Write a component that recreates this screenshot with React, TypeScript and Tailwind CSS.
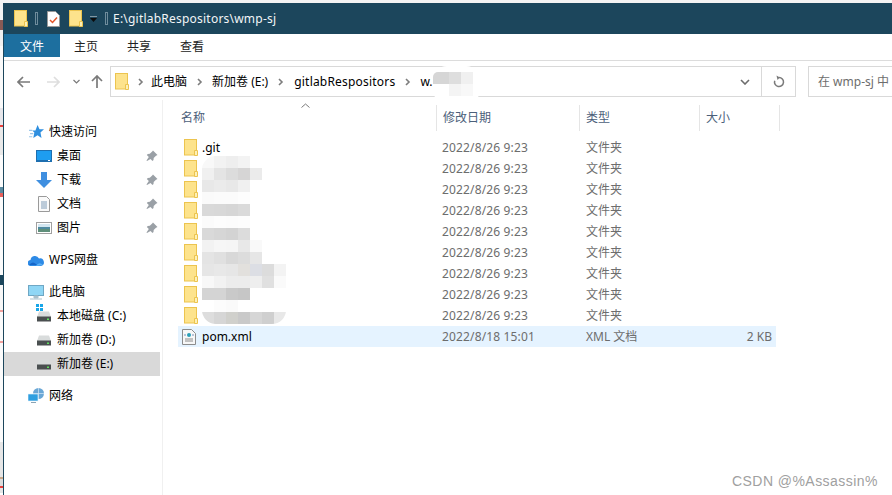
const edgeStrip = [
  { h: 20, c: "#f3f3f3" },
  { h: 10, c: "#8a5a55" },
  { h: 16, c: "#f0f0f0" },
  { h: 62, c: "#fafafa" },
  { h: 17, c: "#e6e6ea" },
  { h: 2, c: "#e8403c" },
  { h: 28, c: "#e9e9e9" },
  { h: 32, c: "#fcfcfc" },
  { h: 6, c: "#5b8aa0" },
  { h: 4, c: "#e8605c" },
  { h: 78, c: "#fbfbfb" },
  { h: 10, c: "#1c465c" },
  { h: 25, c: "#f7f7f7" },
  { h: 2, c: "#f2a09c" },
  { h: 29, c: "#fbfbfb" },
  { h: 2, c: "#f2a09c" },
  { h: 99, c: "#fbfbfb" },
  { h: 35, c: "#e6e6e6" },
  { h: 2, c: "#c9a888" },
  { h: 7, c: "#dcdcdc" },
  { h: 2, c: "#e8403c" },
  { h: 5, c: "#e6e6e6" },
];

const mosaic = [
  ["#f8f8f8", "#f2f2f2", "#eeeeee", "#f3f3f3", "#ffffff", "#ffffff", "#ffffff"],
  ["#f0f0f0", "#e4e4e4", "#dcdcdc", "#d6d5d5", "#ebebeb", "#ffffff", "#ffffff"],
  ["#e8e8e8", "#ebebeb", "#e8e8e8", "#f0f0f0", "#ffffff", "#ffffff", "#ffffff"],
  ["#fafafa", "#fbfbfb", "#fbfbfb", "#fdfdfd", "#ffffff", "#ffffff", "#ffffff"],
  ["#d9d9d9", "#d8d8d8", "#d6d6d6", "#dadada", "#ffffff", "#ffffff", "#ffffff"],
  ["#fbfbfb", "#fdfdfd", "#fcfcfc", "#fdfdfd", "#ffffff", "#ffffff", "#ffffff"],
  ["#d9d9d9", "#d6d6d6", "#d3d3d3", "#dcdcdc", "#ffffff", "#ffffff", "#ffffff"],
  ["#f2f2f2", "#f6f6f6", "#f5f5f5", "#e8e8e8", "#f9f9f9", "#ffffff", "#ffffff"],
  ["#e4e4e4", "#e0e0e0", "#d8d8d8", "#dcdcdc", "#e6e6e6", "#ffffff", "#ffffff"],
  ["#e6e6e6", "#e8e8e8", "#e6e6e6", "#e2e0dd", "#dcdee4", "#dcdcdc", "#f3f3f3"],
  ["#f8f8f8", "#f2f2f2", "#ececec", "#ececec", "#eeeeee", "#e0e0e0", "#fafafa"],
  ["#d4d4d4", "#d4d4d4", "#c9c9c9", "#c6c6c6", "#ffffff", "#ffffff", "#ffffff"],
  ["#ffffff", "#fcfcfc", "#fafafa", "#ffffff", "#ffffff", "#ffffff", "#ffffff"],
  ["#dddddd", "#d6d6d6", "#d0d0cc", "#c9c9c9", "#d6d6d6", "#cfcfcf", "#e8e8e8"],
];

function Folder({ className = "" }: { className?: string }) {
  return (
    <svg width="14" height="17" viewBox="0 0 14 17" className={className}>
      <rect x="0.5" y="0.5" width="12" height="15.5" fill="#fde38c" stroke="#ecc44f" />
      <path d="M10.5 16.5v-5h3v5z" fill="#fdf0b8" stroke="#ecc44f" />
    </svg>
  );
}

function Chevron() {
  return (
    <svg width="6" height="8" viewBox="0 0 6 8">
      <path d="M1 1l3 3-3 3" fill="none" stroke="#7d7d7d" strokeWidth="1.6" />
    </svg>
  );
}

function Pin() {
  return (
    <svg width="12" height="12" viewBox="0 0 12 12" className="ml-auto mr-[2px]">
      <path d="M7 0.5l4.5 4.5-1.5.7-2.3 2.4-.2 2-1 1-2-2L1 11l-.5-.5 2.3-3.5-2-2 1-1 2-.2 2.4-2.3z" fill="#9aa0a6" />
    </svg>
  );
}

function Drive() {
  return (
    <svg width="14" height="11" viewBox="0 0 14 11">
      <path d="M2 0.5h10l2 5.5H0z" fill="#d9dcdc" />
      <rect y="5.5" width="14" height="5" fill="#4a4f50" />
      <rect x="10" y="7.5" width="2" height="1.5" fill="#5fe05f" />
    </svg>
  );
}

function NavItem({
  icon,
  label,
  indent = false,
  pinned = false,
  active = false,
}: {
  icon: React.ReactNode;
  label: string;
  indent?: boolean;
  pinned?: boolean;
  active?: boolean;
}) {
  return (
    <div className={`flex h-6 w-[156px] items-center ${active ? "bg-[#d9d9d9]" : ""}`}>
      <div className={`flex w-4 justify-center ${indent ? "ml-[32px] mr-[5px]" : "ml-[24px] mr-[5px]"}`}>{icon}</div>
      <span className="whitespace-nowrap text-black">{label}</span>
      {pinned && <Pin />}
    </div>
  );
}

function FileRow({ name, type, size, selected }: { name?: string; type: string; size?: string; selected?: boolean }) {
  return (
    <div className={`flex h-[21px] w-[598px] items-center ${selected ? "bg-[#e5f3ff]" : ""}`}>
      <div className="flex w-[264px] items-center pl-[6px]">
        {selected ? (
          <svg width="14" height="16" viewBox="0 0 14 16" className="-ml-[2px] mr-[6px]">
            <path d="M.5.5h9l4 4v11H.5z" fill="#f7f7f7" stroke="#8c8c8c" />
            <path d="M3 10h8M3 12h8" stroke="#8c8c8c" />
            <circle cx="7" cy="6" r="2" fill="#2a9fb8" />
            <path d="M3.5 6L2.5 6M10.5 6l1 0" stroke="#4a6fb0" strokeWidth="1.4" />
          </svg>
        ) : (
          <Folder className="mr-[4px] -mt-[1px]" />
        )}
        {name && <span className="text-black">{name}</span>}
      </div>
      <span className="w-[144px] tracking-[0.15px] text-[#6d6d6d]">{selected ? "2022/8/18 15:01" : "2022/8/26 9:23"}</span>
      <span className="w-[120px] text-[#6d6d6d]">{type}</span>
      <span className="w-[66px] text-right text-[#6d6d6d]">{size}</span>
    </div>
  );
}

function ColumnHead({ label, width }: { label: string; width: string }) {
  return (
    <div className={`${width} flex h-[26px] items-center border-r border-[#e5e5e5] pl-[6px] text-[#4c607a]`}>
      {label}
    </div>
  );
}

export default function App() {
  const rows = Array.from({ length: 9 });

  return (
    <div className="relative flex h-[495px] w-[892px] overflow-hidden bg-white text-[12px] font-['Noto_Sans','Noto_Sans_CJK_SC',sans-serif]">
      <div className="flex w-[3px] shrink-0 flex-col">
        {edgeStrip.map((s, i) => (
          <div key={i} style={{ height: s.h, background: s.c }} />
        ))}
      </div>

      <div className="flex min-w-0 flex-1 flex-col">
        <div className="h-[3px] shrink-0 bg-[#f3f3f3]" />
        <div className="flex flex-1 flex-col border-l border-[#1c465c]">
          {/* title bar */}
          <div className="-ml-px flex h-[31px] shrink-0 items-center bg-[#1c465c] pl-[11px] text-[#f2f5f7]">
            <Folder />
            <div className="ml-[7px] h-[13px] w-[3px] border border-[#6f8c9c]" />
            <svg width="13" height="16" viewBox="0 0 13 16" className="ml-[9px]">
              <path d="M.5.5h8l4 4v11H.5z" fill="#fff" stroke="#9a9a9a" />
              <path d="M3 9l2.500 2.500L10 6.500" fill="none" stroke="#e2552a" strokeWidth="1.5" />
            </svg>
            <Folder className="ml-[9px]" />
            <svg width="7" height="8" viewBox="0 0 7 8" className="ml-[7px] mt-[3px]">
              <path d="M0 0h7" stroke="#e8e8e8" />
              <path d="M0 2h7L3.500 6z" fill="#0b0b0b" />
            </svg>
            <div className="ml-[8px] h-[13px] w-[3px] border border-[#6f8c9c]" />
            <span className="ml-[5px] whitespace-nowrap tracking-[0.22px]">E:\gitlabRespositors\wmp-sj</span>
          </div>

          {/* ribbon tabs */}
          <div className="flex h-[27px] shrink-0 border-b border-[#dcdcdc]">
            <div className="flex h-[23px] w-[56px] items-center justify-center bg-[#1d6f9f] pt-[2px] text-white">文件</div>
            <div className="flex h-[23px] items-center gap-[29px] pl-[14px] pt-[2px] text-[#222]">
              <span>主页</span>
              <span>共享</span>
              <span>查看</span>
            </div>
          </div>

          {/* navigation */}
          <div className="flex h-[39px] shrink-0 items-start pt-[5px]">
            <div className="flex h-[31px] w-[106px] shrink-0 items-center">
              <svg width="13" height="12" viewBox="0 0 13 12" className="ml-[13px]">
                <path d="M6 1L1 6l5 5M1 6h12" fill="none" stroke="#7a7a7a" strokeWidth="1.7" />
              </svg>
              <svg width="13" height="12" viewBox="0 0 13 12" className="ml-[17px]">
                <path d="M7 1l5 5-5 5M12 6H0" fill="none" stroke="#dedede" strokeWidth="1.7" />
              </svg>
              <svg width="7" height="5" viewBox="0 0 7 5" className="ml-[13px]">
                <path d="M.5 1l3 3 3-3" fill="none" stroke="#7a7a7a" strokeWidth="1.2" />
              </svg>
              <svg width="12" height="13" viewBox="0 0 12 13" className="ml-[11px]">
                <path d="M1 6l5-5 5 5M6 1v12" fill="none" stroke="#7a7a7a" strokeWidth="1.7" />
              </svg>
            </div>
            <div className="flex h-[31px] w-[686px] shrink-0 items-center border border-[#d9d9d9]">
              <Folder className="ml-[4px]" />
              <div className="ml-[9px]"><Chevron /></div>
              <span className="ml-[7px] whitespace-nowrap text-black">此电脑</span>
              <div className="ml-[10px]"><Chevron /></div>
              <span className="ml-[9px] whitespace-nowrap text-black">新加卷 (E:)</span>
              <div className="ml-[10px]"><Chevron /></div>
              <span className="ml-[10px] whitespace-nowrap tracking-[0.2px] text-black">gitlabRespositors</span>
              <div className="ml-[10px]"><Chevron /></div>
              <span className="ml-[9px] whitespace-nowrap text-black">w.</span>
              <svg width="10" height="6" viewBox="0 0 10 6" className="ml-auto">
                <path d="M1 1l4 4 4-4" fill="none" stroke="#6d6d6d" strokeWidth="1.6" />
              </svg>
              <div className="ml-[11px] flex h-full w-[34px] items-center justify-center border-l border-[#d9d9d9]">
                <svg width="12" height="13" viewBox="0 0 12 13">
                  <path d="M6 2.500a4.500 4.500 0 1 1-4.300 3.200" fill="none" stroke="#7a7a7a" strokeWidth="1.5" />
                  <path d="M3.500 0.500L6.800 2.600 4.500 5z" fill="#7a7a7a" />
                </svg>
              </div>
            </div>
            <div className="ml-[12px] flex h-[31px] w-[100px] shrink-0 items-center border border-[#d9d9d9] pl-[9px] text-[#6d6d6d]">
              <span className="whitespace-nowrap">在 wmp-sj 中</span>
            </div>
          </div>

          {/* body */}
          <div className="flex min-h-0 flex-1">
            <div className="w-[159px] shrink-0 border-r border-[#f0f0f0] pt-[20px]">
              <NavItem
                label="快速访问"
                icon={
                  <svg width="15" height="14" viewBox="0 0 14 13">
                    <path d="M8 0l1.800 4H14l-3.300 3 1 5L8 9.500 4 12l1-5-2-2h3z" fill="#2f8fdf" />
                    <path d="M0 5h3M1 8h3M0 11h3" stroke="#9cc7ea" />
                  </svg>
                }
              />
              <NavItem
                label="桌面"
                indent
                pinned
                icon={
                  <svg width="16" height="12" viewBox="0 0 16 12">
                    <rect width="16" height="12" fill="#1e6fb0" />
                    <rect x="1" y="1" width="14" height="9" fill="#1e9df0" />
                    <rect x="12" y="10" width="2" height="1" fill="#fff" />
                  </svg>
                }
              />
              <NavItem
                label="下载"
                indent
                pinned
                icon={
                  <svg width="16" height="16" viewBox="0 0 16 16">
                    <path d="M5 0h6v8h5l-8 8-8-8h5z" fill="#3f8fe0" />
                  </svg>
                }
              />
              <NavItem
                label="文档"
                indent
                pinned
                icon={
                  <svg width="12" height="16" viewBox="0 0 12 16">
                    <path d="M.5.5h8l3 3v12H.5z" fill="#fafafa" stroke="#9a9a9a" />
                    <path d="M3 6h6M3 8h6M3 10h6M3 12h6" stroke="#7f9cb8" />
                  </svg>
                }
              />
              <NavItem
                label="图片"
                indent
                pinned
                icon={
                  <svg width="16" height="12" viewBox="0 0 16 12">
                    <rect x="0.5" y="0.500" width="15" height="11" fill="#fff" stroke="#a0a0a0" />
                    <rect x="2" y="2" width="12" height="3" fill="#d3e6f0" />
                    <rect x="2" y="5" width="12" height="2" fill="#4f8aa0" />
                    <rect x="2" y="7" width="12" height="3" fill="#5f8f7a" />
                  </svg>
                }
              />
              <div className="mt-2">
                <NavItem
                  label="WPS网盘"
                  icon={
                    <svg width="16" height="11" viewBox="0 0 16 11">
                      <path d="M3 11a3 3 0 0 1-.500-6A4.500 4.500 0 0 1 11 3.500 3.800 3.800 0 0 1 13 11z" fill="#2d8ae6" />
                      <path d="M1 10q4-5 8 0z" fill="#1565c8" />
                      <path d="M8 11q3-5 7-1z" fill="#5ab0f5" />
                    </svg>
                  }
                />
              </div>
              <div className="mt-2">
                <NavItem
                  label="此电脑"
                  icon={
                    <svg width="16" height="15" viewBox="0 0 16 15">
                      <rect x="0.5" y="0.500" width="15" height="10" fill="#8fd6f5" stroke="#6fa7c4" />
                      <path d="M6 11h4v2H6zM2 14h12" fill="#a9c0cc" stroke="#a9c0cc" />
                    </svg>
                  }
                />
              </div>
              <NavItem
                label="本地磁盘 (C:)"
                indent
                icon={
                  <div className="relative">
                    <Drive />
                    <svg width="7" height="7" viewBox="0 0 7 7" className="absolute -left-[1px] -top-[7px]">
                      <path d="M0 0h3v3H0zM4 0h3v3H4zM0 4h3v3H0zM4 4h3v3H4z" fill="#18a6e8" />
                    </svg>
                  </div>
                }
              />
              <NavItem label="新加卷 (D:)" indent icon={<Drive />} />
              <NavItem label="新加卷 (E:)" indent active icon={<Drive />} />
              <div className="mt-2">
                <NavItem
                  label="网络"
                  icon={
                    <svg width="16" height="16" viewBox="0 0 16 16">
                      <circle cx="10.500" cy="5.500" r="5.500" fill="#6aa7d6" />
                      <path d="M10.500 0v11M5 5.500h11" stroke="#d6e8f5" strokeWidth="0.7" />
                      <rect x="0" y="6" width="10" height="7" fill="#2f9fe0" stroke="#e8f4fb" strokeWidth="0.6" />
                      <path d="M3 14.500h5" stroke="#8aa4b5" />
                    </svg>
                  }
                />
              </div>
            </div>

            <div className="min-w-0 flex-1">
              <div className="relative ml-[12px] mt-[5px] flex">
                <ColumnHead label="名称" width="w-[262px]" />
                <ColumnHead label="修改日期" width="w-[143px]" />
                <ColumnHead label="类型" width="w-[120px]" />
                <ColumnHead label="大小" width="w-[80px]" />
                <svg width="9" height="5" viewBox="0 0 9 5" className="absolute left-[126px] -top-[2px]">
                  <path d="M.5 4.500l4-3.500 4 3.500" fill="none" stroke="#7a7a7a" />
                </svg>
              </div>
              <div className="ml-[15px] mt-[6px]">
                <FileRow name=".git" type="文件夹" />
                {rows.slice(1).map((_, i) => (
                  <FileRow key={i} type="文件夹" />
                ))}
                <FileRow name="pom.xml" type="XML 文档" size="2 KB" selected />
              </div>
            </div>
          </div>
        </div>
      </div>

      {/* blurred file names */}
      <div className="absolute left-[202px] top-[156px] w-[84px] overflow-hidden rounded-b-[14px] rounded-tl-[14px]">
        {mosaic.map((row, r) => (
          <div key={r} className="flex h-[12px]">
            {row.map((c, i) => (
              <div key={i} className="h-[12px] w-[12px]" style={{ background: c }} />
            ))}
          </div>
        ))}
      </div>

      {/* blurred address */}
      <div className="absolute left-[433px] top-[66px] h-[38px] w-[47px] rounded-[14px] bg-white pt-[6px]">
        <div className="flex h-[12px]">
          <div className="h-full w-[16px] rounded-tl-[5px] bg-[#d6d6d6]" />
          <div className="h-full w-[12px] bg-[#dedede]" />
          <div className="h-full w-[12px] bg-[#f0f0f0]" />
        </div>
        <div className="ml-[16px] flex h-[12px]">
          <div className="h-full w-[12px] bg-[#f4f4f4]" />
          <div className="h-full w-[12px] bg-[#f8f8f8]" />
        </div>
      </div>

      <span className="absolute left-[732px] top-[471px] whitespace-nowrap font-['Liberation_Sans',sans-serif] text-[14px] tracking-[0.45px] text-[#a0a0a0]">
        CSDN @%Assassin%
      </span>
    </div>
  );
}
